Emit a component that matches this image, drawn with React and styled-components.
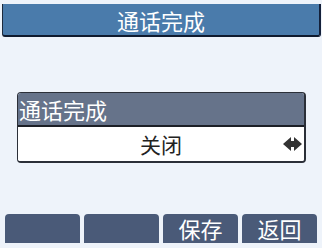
import React from "react";
import styled, { createGlobalStyle } from "styled-components";

const Global = createGlobalStyle`
  html, body { margin: 0; padding: 0; background: #eef3fa; }
  body { font-family: "Noto Sans CJK SC", "Noto Sans", sans-serif; }
`;

const Screen = styled.div`
  width: 322px;
  height: 248px;
  display: flex;
  flex-direction: column;
  background: #eef3fa;
  overflow: hidden;
`;

const TitleBar = styled.div`
  margin: 4px 1px 0 2px;
  height: 30px;
  background: #4a7bab;
  border-left: 1px solid #1d2a3c;
  border-right: 2px solid #14203a;
  border-bottom: 2px solid #0f1a2e;
  border-radius: 0 0 3px 3px;
  display: flex;
  align-items: center;
  justify-content: center;
  color: #fff;
  font-size: 22px;
  line-height: 1;
  padding-top: 1px;
`;

const ItemBox = styled.div`
  margin: 55px 16px 0 17px;
  border: 1px solid #2b2f38;
  border-right-width: 2px;
  border-bottom-width: 2px;
  border-radius: 4px;
  overflow: hidden;
  display: flex;
  flex-direction: column;
`;

const ItemHeader = styled.div`
  height: 32px;
  background: #66738a;
  border-bottom: 2px solid #1c1f26;
  color: #fff;
  font-size: 22px;
  line-height: 1;
  display: flex;
  align-items: center;
  padding-left: 1px;
`;

const ItemValue = styled.div`
  position: relative;
  height: 34px;
  background: #fff;
  color: #222;
  font-size: 21px;
  line-height: 1;
  display: flex;
  align-items: center;
  justify-content: center;
`;

const Arrow = styled.svg`
  position: absolute;
  right: 2px;
  top: 10px;
`;

const SoftKeys = styled.div`
  margin-top: auto;
  margin-bottom: 5px;
  padding: 0 5px;
  display: grid;
  grid-template-columns: repeat(4, 75px);
  gap: 4px;
`;

const SoftKey = styled.div`
  height: 29px;
  background: #4a5a78;
  border-radius: 4px 4px 0 0;
  color: #fff;
  font-size: 22px;
  line-height: 1;
  display: flex;
  align-items: center;
  justify-content: center;
  padding-bottom: 2px;
  box-sizing: border-box;
`;

export default function App() {
  return (
    <>
      <Global />
      <Screen>
        <TitleBar>通话完成</TitleBar>
        <ItemBox>
          <ItemHeader>通话完成</ItemHeader>
          <ItemValue>
            关闭
            <Arrow width="19" height="14" viewBox="0 0 19 14">
              <path d="M0 7 L8 0 L8 4 L11 4 L11 0 L19 7 L11 14 L11 10 L8 10 L8 14 Z" fill="#333" />
            </Arrow>
          </ItemValue>
        </ItemBox>
        <SoftKeys>
          <SoftKey />
          <SoftKey />
          <SoftKey>保存</SoftKey>
          <SoftKey>返回</SoftKey>
        </SoftKeys>
      </Screen>
    </>
  );
}
